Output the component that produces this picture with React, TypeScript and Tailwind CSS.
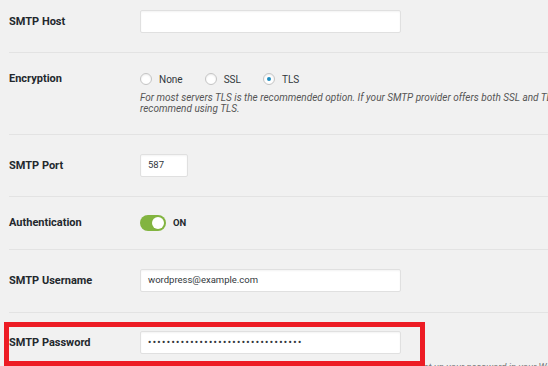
import React from "react";

const font = { fontFamily: "Roboto, 'Liberation Sans', sans-serif" };

function Row({
  label,
  children,
  className,
  labelClass = "leading-[23px]",
}: {
  label: string;
  children: React.ReactNode;
  className: string;
  labelClass?: string;
}) {
  return (
    <div className={`flex ml-[9px] border-b border-[#e3e3e3] ${className}`}>
      <div className={`w-[131px] shrink-0 text-[11px] font-bold text-[#23282d] ${labelClass}`}>
        {label}
      </div>
      <div className="flex-1 min-w-0">{children}</div>
    </div>
  );
}

function Input({ w, value, dots }: { w: string; value?: string; dots?: boolean }) {
  return (
    <div
      className={`${w} h-[23px] bg-white border border-[#e0e0e0] rounded-[2px] shadow-[inset_0_1px_2px_rgba(0,0,0,0.05)] flex items-center px-[7px] text-[9.5px] text-[#32373c]`}
    >
      {dots ? (
        <span className="tracking-[1.45px] text-[9px] font-bold">{value}</span>
      ) : (
        value
      )}
    </div>
  );
}

function Radio({ label, checked }: { label: string; checked?: boolean }) {
  return (
    <div className="flex items-center">
      <div className="w-[12px] h-[12px] rounded-full border border-[#c4c4c4] bg-white flex items-center justify-center shadow-[inset_0_1px_2px_rgba(0,0,0,0.08)]">
        {checked && <div className="w-[4px] h-[4px] rounded-full bg-[#1e8cbe]" />}
      </div>
      <span className="ml-[7px] text-[10px] text-[#32373c]">{label}</span>
    </div>
  );
}

export default function App() {
  const dots = "•".repeat(33);
  return (
    <div
      className="relative w-[548px] h-[366px] overflow-hidden bg-[#f1f1f1]"
      style={font}
    >
      <Row label="SMTP Host" className="pt-[10px] pb-[19px]">
        <Input w="w-[261px]" />
      </Row>
      <Row label="Encryption" className="pt-[19px] pb-[20px]" labelClass="leading-[14px]">
        <div className="flex items-center gap-[22px] h-[14px]">
          <Radio label="None" />
          <Radio label="SSL" />
          <Radio label="TLS" checked />
        </div>
        <p className="mt-[6px] text-[10px] leading-[11px] italic text-[#555] whitespace-nowrap">
          For most servers TLS is the recommended option. If your SMTP provider offers both SSL and TLS, we
          <br />
          recommend using TLS.
        </p>
      </Row>
      <Row label="SMTP Port" className="pt-[19px] pb-[19px]">
        <Input w="w-[48px]" value="587" />
      </Row>
      <Row label="Authentication" className="pt-[18px] pb-[18px]" labelClass="leading-[16px]">
        <div className="flex items-center h-[16px]">
          <div className="w-[26px] h-[16px] rounded-full bg-[#82b440] flex items-center justify-end pr-[2px]">
            <div className="w-[12px] h-[12px] rounded-full bg-white" />
          </div>
          <span className="ml-[7px] text-[9.5px] font-bold text-[#23282d]">ON</span>
        </div>
      </Row>
      <Row label="SMTP Username" className="pt-[19px] pb-[20px]">
        <Input w="w-[261px]" value="wordpress@example.com" />
      </Row>
      <Row label="SMTP Password" className="pt-[18px] pb-[19px]">
        <Input w="w-[261px]" value={dots} dots />
        <p className="mt-[7px] text-[9.5px] leading-[11px] italic text-[#777] whitespace-nowrap">
          The password is stored in plain text. We highly recommend that you set up your password in your WordPress configuration file.
        </p>
      </Row>
      <div className="absolute left-[4px] top-[322px] w-[421px] h-[44px] border-[5px] border-[#ed1c24] pointer-events-none" />
    </div>
  );
}
